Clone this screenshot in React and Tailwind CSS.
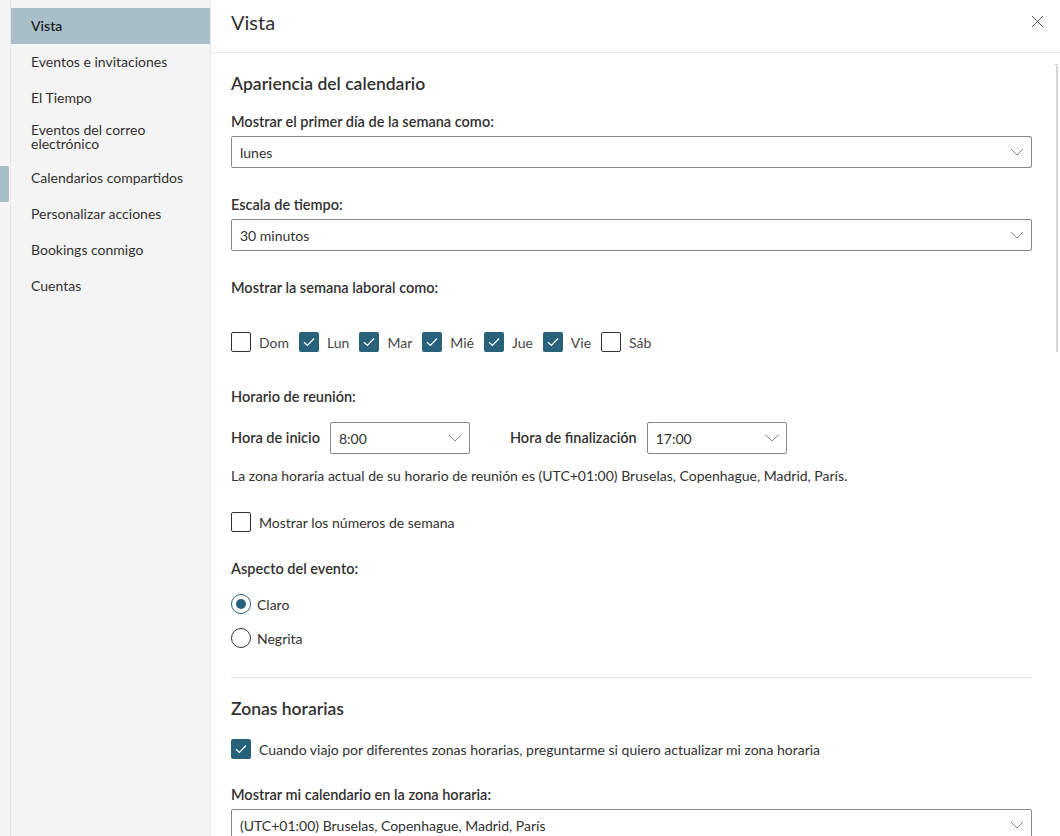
import React from 'react';

const navItems = [
  { label: 'Vista', active: true },
  { label: 'Eventos e invitaciones' },
  { label: 'El Tiempo' },
  { label: 'Eventos del correo electrónico', twoLine: true },
  { label: 'Calendarios compartidos' },
  { label: 'Personalizar acciones' },
  { label: 'Bookings conmigo' },
  { label: 'Cuentas' },
];

const days = [
  { label: 'Dom', on: false },
  { label: 'Lun', on: true },
  { label: 'Mar', on: true },
  { label: 'Mié', on: true },
  { label: 'Jue', on: true },
  { label: 'Vie', on: true },
  { label: 'Sáb', on: false },
];

const Chevron = () => (
  <svg width="14" height="8" viewBox="0 0 14 8" fill="none" className="shrink-0">
    <path d="M1 1l6 6 6-6" stroke="#8a8886" strokeWidth="1" />
  </svg>
);

const Select = ({ value, className = '' }) => (
  <div className={`flex h-8 items-center justify-between border border-[#8a8886] rounded-[2px] pl-[8px] pr-[7px] text-[14px] text-[#323130] ${className}`}>
    <span>{value}</span>
    <Chevron />
  </div>
);

const Checkbox = ({ checked }) =>
  checked ? (
    <span className="flex h-5 w-5 shrink-0 items-center justify-center rounded-[2px] bg-[#28617a]">
      <svg width="12" height="10" viewBox="0 0 12 10" fill="none">
        <path d="M1 5.2l3.4 3.3L11 1.5" stroke="white" strokeWidth="1.2" />
      </svg>
    </span>
  ) : (
    <span className="h-5 w-5 shrink-0 rounded-[2px] border border-[#323130] bg-white" />
  );

const Radio = ({ checked, label }) => (
  <div className="flex h-5 items-center gap-[6px]">
    {checked ? (
      <span className="flex h-5 w-5 items-center justify-center rounded-full border border-[#28617a]">
        <span className="h-[10px] w-[10px] rounded-full bg-[#28617a]" />
      </span>
    ) : (
      <span className="h-5 w-5 rounded-full border border-[#323130]" />
    )}
    <span className="text-[14px] text-[#323130]">{label}</span>
  </div>
);

export default function App() {
  return (
    <div className="flex h-[836px] w-[1060px] overflow-hidden bg-white font-['Segoe_UI','Lato',sans-serif] text-[#323130]">
      {/* far-left strip */}
      <div className="w-[11px] shrink-0 border-r border-[#e6e6e6] bg-[#f4f4f4] pt-[166px]">
        <div className="h-[36px] w-[9px] rounded-r-[2px] bg-[#a8bfc9]" />
      </div>

      {/* settings nav */}
      <nav className="w-[200px] shrink-0 border-r border-[#ebebeb] bg-[#f4f4f4] pt-2">
        {navItems.map((it) =>
          it.twoLine ? (
            <div key={it.label} className="pt-[7px] pb-[9px] pl-5 pr-12 text-[14px] leading-[14px]">
              {it.label}
            </div>
          ) : (
            <div
              key={it.label}
              className={`flex h-9 items-center pb-[2px] pl-5 text-[14px] ${it.active ? 'bg-[#a8bfc9] font-semibold text-[#201f1e]' : ''}`}
            >
              {it.label}
            </div>
          )
        )}
      </nav>

      {/* main panel */}
      <main className="flex min-w-0 flex-1 flex-col">
        <header className="flex h-[53px] shrink-0 items-center justify-between border-b border-[#ebebeb] pl-5 pr-4">
          <h1 className="pb-[9px] text-[20px] font-normal">Vista</h1>
          <svg width="13" height="13" viewBox="0 0 13 13" className="mb-[9px]">
            <path d="M1 1l11 11M12 1L1 12" stroke="#605e5c" strokeWidth="1" />
          </svg>
        </header>

        <div className="flex min-h-0 flex-1">
          <div className="flex-1 pl-5 pr-5">
            <h2 className="mt-[19px] text-[17.5px] font-semibold leading-6">Apariencia del calendario</h2>

            <p className="mt-[16px] text-[14.5px] font-semibold leading-5">Mostrar el primer día de la semana como:</p>
            <Select value="lunes" className="mt-1" />

            <p className="mt-[27px] text-[14.5px] font-semibold leading-5">Escala de tiempo:</p>
            <Select value="30 minutos" className="mt-1" />

            <p className="mt-[27px] text-[14.5px] font-semibold leading-5">Mostrar la semana laboral como:</p>
            <div className="mt-[34px] flex h-5 items-center gap-[10px]">
              {days.map((d) => (
                <div key={d.label} className="flex items-center gap-2">
                  <Checkbox checked={d.on} />
                  <span className="text-[14px] text-[#484644]">{d.label}</span>
                </div>
              ))}
            </div>

            <p className="mt-[35px] text-[14.5px] font-semibold leading-5">Horario de reunión:</p>
            <div className="mt-[15px] flex items-center">
              <span className="text-[14.5px] font-semibold">Hora de inicio</span>
              <Select value="8:00" className="ml-[10px] w-[140px]" />
              <span className="ml-10 text-[14.5px] font-semibold">Hora de finalización</span>
              <Select value="17:00" className="ml-[10px] w-[140px]" />
            </div>

            <p className="mt-3 text-[14px] leading-5">
              La zona horaria actual de su horario de reunión es (UTC+01:00) Bruselas, Copenhague, Madrid, París.
            </p>

            <div className="mt-[26px] flex h-5 items-center gap-2">
              <Checkbox checked={false} />
              <span className="text-[14px]">Mostrar los números de semana</span>
            </div>

            <p className="mt-[27px] text-[14.5px] font-semibold leading-5">Aspecto del evento:</p>
            <div className="mt-[15px]">
              <Radio checked label="Claro" />
            </div>
            <div className="mt-[14px]">
              <Radio label="Negrita" />
            </div>

            <div className="mt-[29px] border-t border-[#e5e5e5]" />

            <h2 className="mt-[19px] text-[17.5px] font-semibold leading-6">Zonas horarias</h2>
            <div className="mt-[18px] flex h-5 items-center gap-2">
              <Checkbox checked />
              <span className="text-[14px]">
                Cuando viajo por diferentes zonas horarias, preguntarme si quiero actualizar mi zona horaria
              </span>
            </div>

            <p className="mt-[26px] text-[14.5px] font-semibold leading-5">Mostrar mi calendario en la zona horaria:</p>
            <Select value="(UTC+01:00) Bruselas, Copenhague, Madrid, París" className="mt-1" />
          </div>

          {/* thin scrollbar */}
          <div className="flex w-2 shrink-0 flex-col items-end pt-[9px] pr-[2px]">
            <div className="h-[3px] w-[3px] border-b border-[#c8c8c8]" />
            <div className="mt-[1px] h-[286px] w-[2px] bg-[#d6d6d6]" />
          </div>
        </div>
      </main>
    </div>
  );
}
